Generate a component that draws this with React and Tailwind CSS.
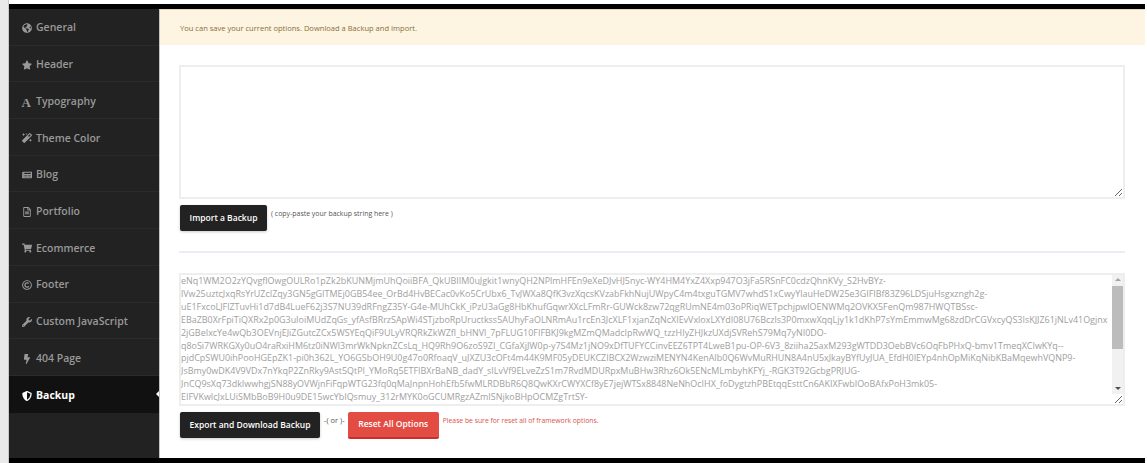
import React from 'react';
import {
  FaGlobeAmericas,
  FaStar,
  FaMagic,
  FaNewspaper,
  FaRegFileAlt,
  FaShoppingCart,
  FaRegCopyright,
  FaWrench,
  FaBolt,
  FaShieldAlt,
} from 'react-icons/fa';

const SerifA = ({ className }) => (
  <span className={`font-['Liberation_Serif',serif] font-bold text-[13px] leading-none -mt-[2px] ${className}`}>A</span>
);

const menu = [
  { label: 'General', Icon: FaGlobeAmericas },
  { label: 'Header', Icon: FaStar },
  { label: 'Typography', Icon: SerifA },
  { label: 'Theme Color', Icon: FaMagic },
  { label: 'Blog', Icon: FaNewspaper },
  { label: 'Portfolio', Icon: FaRegFileAlt },
  { label: 'Ecommerce', Icon: FaShoppingCart },
  { label: 'Footer', Icon: FaRegCopyright },
  { label: 'Custom JavaScript', Icon: FaWrench },
  { label: '404 Page', Icon: FaBolt },
  { label: 'Backup', Icon: FaShieldAlt, active: true },
];

const backup = [
  'eNq1WM2O2zYQvgflOwgOULRo1pZk2bKUNMjmUhQoiiBFA_QkUBIIM0uJgkit1wnyQH2NPlmHFEn9eXeDJvHJ5nyc-WY4HM4YxZ4Xxp947O3jFa5RSnFC0cdzQhnKVy_S2HvBYz-',
  'lVw25uztcJxqRsYrUZcIZqy3GN5gGITMEj0GB54ee_OrBd4HvBECac0vKo5CrUbx6_TvJWXa8QfK3vzXqcsKVzabFkhNujUWpyC4m4txguTGMV7whdS1xCwyYlauHeDW25e3GIFIBf83Z96LDSjuHsgxzngh2g-',
  'uE1FxcoLJFlZTuvHi1d7dB4LueF62j3S7NU39dRFngZ35Y-G4e-MUhCkK_iPzU3aGg8HbKhufGqwrXXcLFmRr-GUWck8zw72qgRUmNE4m03oPRiqWETpchjpwlOENWMq2OVKX5FenQm987HWQTBSsc-',
  'EBaZB0XrFpiTiQXRx2p0G3uIoiMUdZqGs_yfAsfBRrzSApWi4STjzboRpUructkss5AUhyFaOLNRmAu1rcEn3JcXLF1xjanZqNcXIEvVxloxLXYdI08U76Bczls3P0mxwXqqLjy1k1dKhP7sYmEmmwMg68zdDrCGVxcyQS3IsKJJZ61jNLv41Ogjnx',
  '2jGBeIxcYe4wQb3OEVnjEJiZGutcZCx5WSYEqQiF9ULyVRQRkZkWZfl_bHNVl_7pFLUG10FIFBKJ9kgMZmQMadcIpRwWQ_tzzHIyZHJkzUXdjSVRehS79Mq7yNI0DO-',
  'q8oSi7WRKGXy0uO4raRxiHM6tz0iNWl3mrWkNpknZCsLq_HQ9Rh9O6zoS9ZI_CGfaXjJW0p-y7S4Mz1jNO9xDfTUFYCCinvEEZ6TPT4LweB1pu-OP-6V3_8ziiha25axM293gWTDD3OebBVc6OqFbPHxQ-bmv1TmeqXCIwKYq--',
  'pjdCpSWU0ihPooHGEpZK1-pi0h362L_YO6GSbOH9U0g47o0RfoaqV_uJXZU3cOFt4m44K9MF05yDEUKCZIBCX2WzwziMENYN4KenAIb0Q6WvMuRHUN8A4nU5xJkayBYfUyJUA_EfdH0IEYp4nhOpMiKqNibKBaMqewhVQNP9-',
  'JsBmy0wDK4V9VDx7nYkqP2ZnRky9Ast5QtPI_YMoRq5ETFIBXrBaNB_dadY_sILvVf9ELveZzS1m7RvdMDURpxMuBHw3Rhz6Ok5ENcMLmbyhKFYj_-RGK3T92GcbgPRJUG-',
  'JnCQ9sXq73dkIwwhgjSN88yOVWjnFiFqpWTG23fq0qMaJnpnHohEfb5fwMLRDBbR6Q8QwKXrCWYXCf8yE7jejWTSx8848NeNhOcIHX_foDygtzhPBEtqqEsttCn6AKIXFwbIOoBAfxPoH3mk05-',
  'EIFVKwIcJxLUiSMbBoB9H0u9DE15wcYbIQsmuy_312rMYK0oGCUMRgzAZmISNjkoBHpOCMZgTrtSY-',
  'Hn3kTQ2wLd8PvXz0mFg7RtYc1VbN6aJ5sUe4GiOq9MfKw2ZxT8nRyCjL0pBhD7uW3vEIa5QmNo1FtGs_Xk6Yr',
].join('\n');

function Sidebar() {
  return (
    <nav className="w-[150px] shrink-0 bg-[#222222] border-r border-[#c4c4c4] box-content font-semibold text-[10.5px]">
      {menu.map(({ label, Icon, active }) => (
        <a
          key={label}
          className={`relative h-[36.7px] flex items-center pt-[3px] pl-[12px] ${
            active ? 'bg-[#111111] text-white font-bold' : 'text-[#999999] border-b border-[#2b2b2b]'
          }`}
        >
          <span className="w-[11px] flex justify-center shrink-0">
            <Icon className="w-[10px] h-[10px] shrink-0" />
          </span>
          <span className="ml-[4px]">{label}</span>
          {active && (
            <span className="absolute right-0 top-[15px] border-y-[3px] border-r-[3px] border-y-transparent border-r-white" />
          )}
        </a>
      ))}
    </nav>
  );
}

function DarkButton({ children, className }) {
  return (
    <button className={`h-[26px] ml-[1px] bg-[#222222] text-white font-semibold text-[8.5px] rounded-[2px] shadow-[0_1px_3px_rgba(0,0,0,0.2)] ${className}`}>
      {children}
    </button>
  );
}

// the headless browser hides native scrollbars, so this one is drawn over the textarea
function ScrollbarOverlay() {
  return (
    <div className="absolute top-[2px] right-[2px] bottom-[12px] w-[11px] bg-[#f1f1f1] pointer-events-none flex flex-col items-center">
      <span className="mt-[3px] border-x-[3px] border-b-[3px] border-x-transparent border-b-[#a3a3a3]" />
      <span className="mt-[5px] w-full h-[63px] bg-[#bcbcbc]" />
      <span className="mt-auto mb-[4px] border-x-[3px] border-t-[3px] border-x-transparent border-t-[#505050]" />
    </div>
  );
}

export default function App() {
  return (
    <div className="w-[1147px] h-[463px] overflow-hidden bg-white flex font-['Open_Sans',sans-serif]">
      <div className="w-[9px] shrink-0 bg-[#e9e9e9] border-r border-[#c8c8c8]" />
      <div className="w-[1136px] mt-[4px] border-y-[5px] border-black flex h-[459px] box-border">
        <Sidebar />
        <main className="flex-1 min-w-0">
          <div className="h-[36px] flex items-center pl-[20px] pt-[2px] bg-[#fdf5e2] border-t border-[#e6d8b0] text-[#8a6d3b] text-[7.55px]">
            You can save your current options. Download a Backup and Import.
          </div>
          <div className="pl-[19px] pr-[20px] pt-[20px]">
            <textarea className="block w-[946px] h-[134px] border-2 border-[#eeeeee] outline-none resize-y" />
            <div className="flex items-start mt-[6px]">
              <DarkButton className="w-[87px]">Import a Backup</DarkButton>
              <span className="ml-[4px] mt-[4px] text-[6.95px] text-[#555555]">( copy-paste your backup string here )</span>
            </div>
            <hr className="mt-[20px] border-0 h-[2px] bg-[#efeaf6] w-[946px]" />
            <div className="relative mt-[20px] w-[946px] h-[133px]">
              <textarea
                readOnly
                wrap="off"
                value={backup}
                className="block w-full h-full border-2 border-[#eeeeee] outline-none resize-y overflow-x-hidden overflow-y-hidden p-0 text-[8.95px] leading-[12.9px] text-[#a0a0a0]"
              />
              <ScrollbarOverlay />
            </div>
            <div className="flex items-start mt-[6px]">
              <DarkButton className="w-[140px]">Export and Download Backup</DarkButton>
              <span className="ml-[4px] mr-[3px] mt-[3px] text-[7.5px] text-[#555555]">-( or )-</span>
              <button className="h-[27px] w-[91px] bg-[#e34c43] border-b-2 border-[#c9302c] text-white font-semibold text-[8.5px] rounded-[2px]">
                Reset All Options
              </button>
              <span className="ml-[4px] mt-[4px] text-[6.8px] text-[#d9534f]">Please be sure for reset all of framework options.</span>
            </div>
          </div>
        </main>
      </div>
    </div>
  );
}
